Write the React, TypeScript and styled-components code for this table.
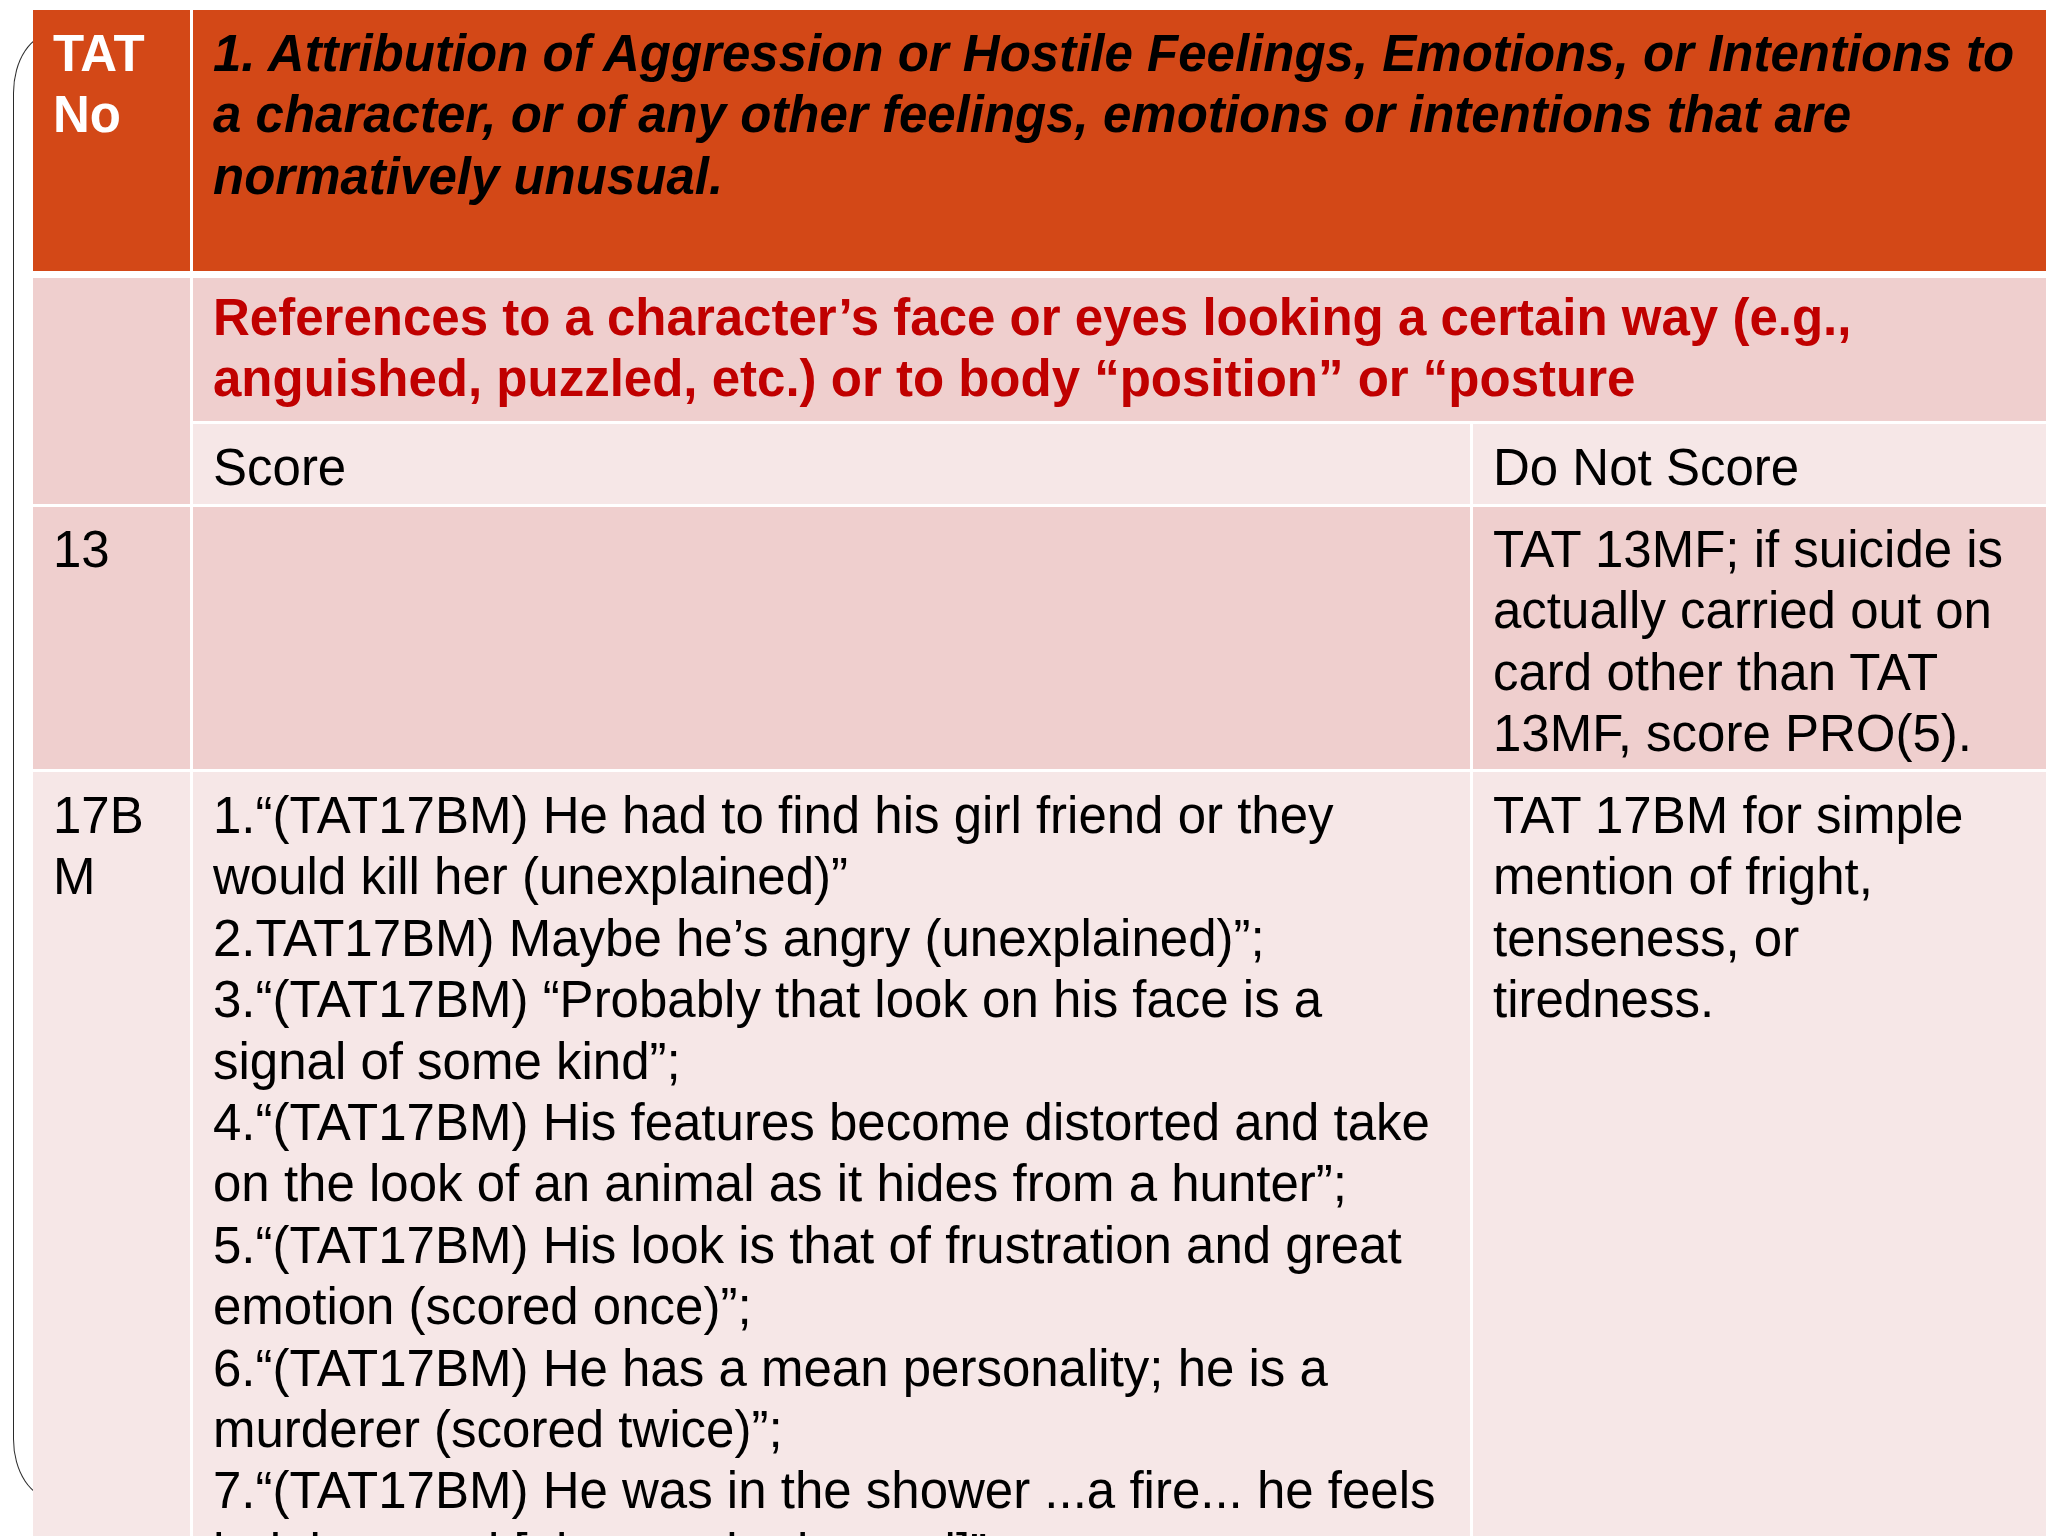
import React from "react";
import styled, { createGlobalStyle } from "styled-components";

const GlobalStyle = createGlobalStyle`
  html, body {
    margin: 0;
    padding: 0;
    background: #ffffff;
  }
  body {
    font-family: "Liberation Sans", Arial, Helvetica, sans-serif;
    overflow: hidden;
  }
`;

const Slide = styled.div`
  position: relative;
  width: 2048px;
  height: 1536px;
  overflow: hidden;
  background: #ffffff;
  padding: 10px 2px 0 33px;
  box-sizing: border-box;

  &::before {
    content: "";
    position: absolute;
    left: 13px;
    top: 33px;
    width: 40px;
    height: 1466px;
    border: 1.5px solid #2a2a2a;
    border-right: none;
    border-radius: 40px 0 0 40px / 60px 0 0 60px;
    box-sizing: border-box;
  }
`;

const Table = styled.div`
  position: relative;
  z-index: 1;
  display: flex;
  flex-direction: column;
  gap: 7px;
  width: 2013px;
`;

const HeaderRow = styled.div`
  display: grid;
  grid-template-columns: 157px 1fr;
  column-gap: 3px;
  height: 261px;
`;

const HeaderCell = styled.div<{ $title?: boolean }>`
  background: #d34817;
  padding: 13px 14px 0 20px;
  font-size: 51px;
  line-height: 61.4px;
  font-weight: 700;
  font-style: ${(p) => (p.$title ? "italic" : "normal")};
  color: ${(p) => (p.$title ? "#000000" : "#ffffff")};
`;

const Body = styled.div`
  display: grid;
  grid-template-columns: 157px 1277px 573px;
  grid-template-rows: 143px 80px 262px 820px;
  gap: 3px;
`;

type Tone = "dark" | "light";

const Cell = styled.div<{
  $tone: Tone;
  $col: string;
  $row: string;
  $padRight?: number;
  $padTop?: number;
}>`
  grid-column: ${(p) => p.$col};
  grid-row: ${(p) => p.$row};
  background: ${(p) => (p.$tone === "dark" ? "#efcfce" : "#f6e7e7")};
  padding: ${(p) => p.$padTop ?? 13}px ${(p) => p.$padRight ?? 14}px 0 20px;
  font-size: 51px;
  line-height: 61.4px;
  color: #000000;
`;

const IdCell = styled(Cell)`
  word-break: break-all;
`;

const CategoryText = styled.div`
  color: #c00000;
  font-weight: 700;
`;

const Item = styled.div``;

const examples = [
  "1.\u201C(TAT17BM) He had to find his girl friend or they would kill her (unexplained)\u201D",
  "2.TAT17BM) Maybe he\u2019s angry (unexplained)\u201D;",
  "3.\u201C(TAT17BM) \u201CProbably that look on his face is a signal of some kind\u201D;",
  "4.\u201C(TAT17BM) His features become distorted and take on the look of an animal as it hides from a hunter\u201D;",
  "5.\u201C(TAT17BM) His look is that of frustration and great emotion (scored once)\u201D;",
  "6.\u201C(TAT17BM) He has a mean personality; he is a murderer (scored twice)\u201D;",
  "7.\u201C(TAT17BM) He was in the shower ...a fire... he feels helpless and [about to be burned]\u201D;",
];

export default function App() {
  return (
    <>
      <GlobalStyle />
      <Slide>
        <Table>
          <HeaderRow>
            <HeaderCell>TAT No</HeaderCell>
            <HeaderCell $title>
              1. Attribution of Aggression or Hostile Feelings, Emotions, or Intentions to a character, or of
              any other feelings, emotions or intentions that are normatively unusual.
            </HeaderCell>
          </HeaderRow>
          <Body>
            <IdCell $tone="dark" $col="1" $row="1 / span 2" />
            <Cell $tone="dark" $col="2 / span 2" $row="1" $padTop={9}>
              <CategoryText>
                References to a character’s face or eyes looking a certain way (e.g., anguished, puzzled,
                etc.) or to body “position” or “posture
              </CategoryText>
            </Cell>
            <Cell $tone="light" $col="2" $row="2">
              Score
            </Cell>
            <Cell $tone="light" $col="3" $row="2" $padRight={30}>
              Do Not Score
            </Cell>

            <IdCell $tone="dark" $col="1" $row="3" $padTop={12}>
              13
            </IdCell>
            <Cell $tone="dark" $col="2" $row="3" />
            <Cell $tone="dark" $col="3" $row="3" $padRight={30} $padTop={12}>
              TAT 13MF; if suicide is actually carried out on card other than TAT 13MF, score PRO(5).
            </Cell>

            <IdCell $tone="light" $col="1" $row="4">
              17BM
            </IdCell>
            <Cell $tone="light" $col="2" $row="4">
              {examples.map((t) => (
                <Item key={t}>{t}</Item>
              ))}
            </Cell>
            <Cell $tone="light" $col="3" $row="4" $padRight={30}>
              TAT 17BM for simple mention of fright, tenseness, or tiredness.
            </Cell>
          </Body>
        </Table>
      </Slide>
    </>
  );
}
